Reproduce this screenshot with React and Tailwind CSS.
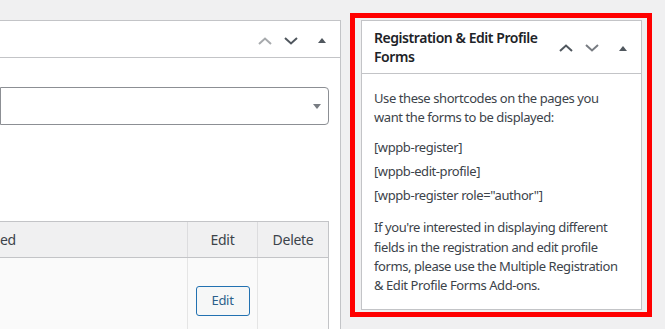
const Chevron = ({ up, color }) => (
  <svg width="14" height="8" viewBox="0 0 14 8" fill="none">
    <path
      d={up ? "M1 7L7 1.5L13 7" : "M1 1L7 6.5L13 1"}
      stroke={color}
      strokeWidth="2"
    />
  </svg>
);

const Triangle = () => (
  <svg width="8" height="5" viewBox="0 0 8 5">
    <path d="M0 5L4 0L8 5Z" fill="#50575e" />
  </svg>
);

const HandleActions = ({ upColor, downColor }) => (
  <div className="flex items-center">
    <span className="w-[26px] flex justify-center">
      <Chevron up color={upColor} />
    </span>
    <span className="w-[26px] flex justify-center">
      <Chevron color={downColor} />
    </span>
    <span className="w-[36px] flex justify-center">
      <Triangle />
    </span>
  </div>
);

const App = () => {
  return (
    <div
      className="w-[665px] h-[329px] overflow-hidden bg-[#f0f0f1] flex items-start text-[#3c434a]"
      style={{ fontFamily: '"Noto Sans", "Open Sans", sans-serif' }}
    >
      {/* main column, title scrolled off to the left */}
      <div className="mt-[20px] w-[341px] h-[320px] bg-white border-t border-r border-[#c3c4c7]">
        <div className="h-[37px] border-b border-[#c3c4c7] flex items-center justify-end pt-[3px]">
          <HandleActions upColor="#a7aaad" downColor="#50575e" />
        </div>
        <div className="pr-[11px] pt-[29px]">
          <div className="h-[38px] border border-[#8c8f94] rounded-l-none rounded-r-[4px] bg-white flex items-center justify-end pr-[7px]">
            <svg width="8" height="5" viewBox="0 0 8 5">
              <path d="M0 0L4 5L8 0Z" fill="#787c82" />
            </svg>
          </div>
          <div className="mt-[96px] border-t border-r border-[#c3c4c7] text-[14px] tracking-[-0.3px]">
            <div className="flex h-[36px] bg-[#f0f0f1] border-b border-[#c3c4c7]">
              <div className="flex-1 flex items-center">ed</div>
              <div className="w-[70px] border-l border-[#dcdcde] flex items-center justify-center">
                Edit
              </div>
              <div className="w-[71px] border-l border-[#dcdcde] flex items-center justify-center">
                Delete
              </div>
            </div>
            <div className="flex h-[80px] bg-[#fafafa]">
              <div className="flex-1" />
              <div className="w-[70px] border-l border-[#e5e5e5] flex justify-center pt-[28px]">
                <button
                  type="button"
                  className="w-[54px] h-[30px] rounded-[3px] border border-[#2271b1] bg-[#f6f7f7] text-[13px] text-[#2c5f8a] flex items-center justify-center"
                >
                  Edit
                </button>
              </div>
              <div className="w-[71px] border-l border-[#e5e5e5]" />
            </div>
          </div>
        </div>
      </div>

      {/* sidebar box with red highlight */}
      <div className="ml-[9px] mt-[13px] w-[302px] border-[5px] border-[#ff0000] pt-[2px] pb-[2px] pl-[6px] pr-[5px]">
        <div className="bg-white border border-[#c3c4c7]">
          <div className="flex items-center border-b border-[#c3c4c7] pl-[12px] py-[7px]">
            <h2 className="flex-1 text-[14px] font-semibold leading-[19px] tracking-[-0.45px] text-[#1d2327]">
              Registration &amp; Edit Profile Forms
            </h2>
            <div className="pt-[2px]">
              <HandleActions upColor="#50575e" downColor="#787c82" />
            </div>
          </div>
          <div className="px-[12px] pt-[15px] pb-[13px] text-[13px] leading-[19.3px] tracking-[-0.42px]">
            <p>Use these shortcodes on the pages you want the forms to be displayed:</p>
            <div className="mt-[10px] flex flex-col gap-[5px]">
              <p>[wppb-register]</p>
              <p>[wppb-edit-profile]</p>
              <p>[wppb-register role="author"]</p>
            </div>
            <p className="mt-[13px]">
              If you're interested in displaying different fields in the registration and edit
              profile forms, please use the Multiple Registration &amp; Edit Profile Forms Add-ons.
            </p>
          </div>
        </div>
      </div>
    </div>
  );
};

export default App;
